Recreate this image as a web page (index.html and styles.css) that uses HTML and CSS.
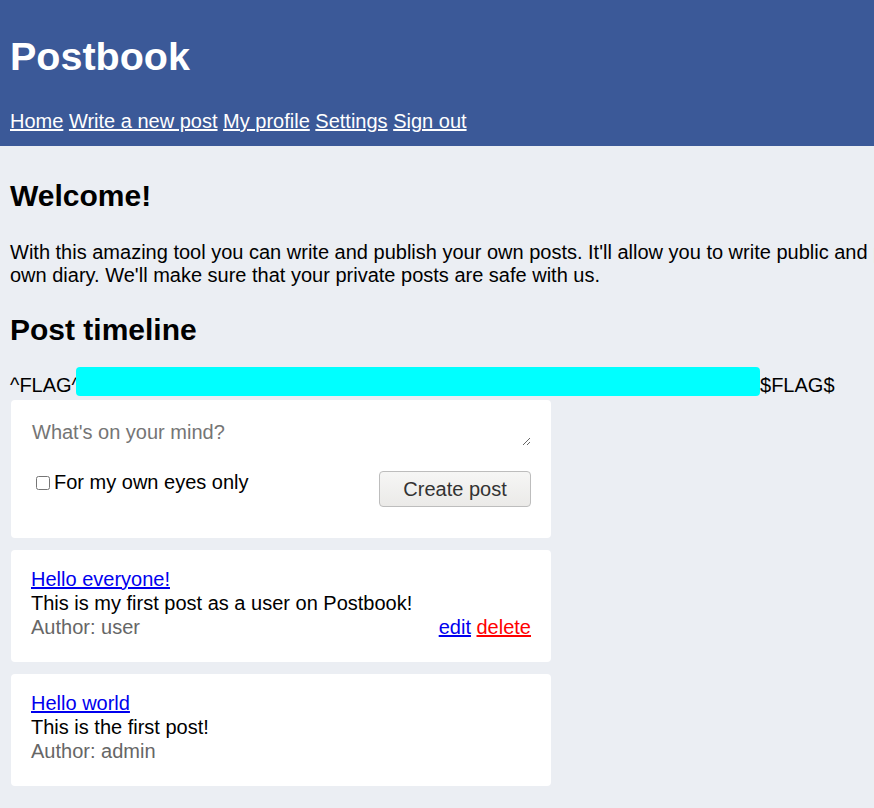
FILE: index.html
```html
<!DOCTYPE html>
<html lang="en">
<head>
<meta charset="utf-8">
<title>Postbook</title>
<link rel="stylesheet" href="styles.css">
</head>
<body>
<header class="site-header">
  <h1 class="brand">Postbook</h1>
  <nav class="nav">
    <a href="#">Home</a>
    <a href="#">Write a new post</a>
    <a href="#">My profile</a>
    <a href="#">Settings</a>
    <a href="#">Sign out</a>
  </nav>
</header>
<main class="content">
  <h2 class="title welcome">Welcome!</h2>
  <p class="intro">With this amazing tool you can write and publish your own posts. It'll allow you to write public and private posts. Public posts can be read by anyone that signs up. Private posts can be used to make your own diary. We'll make sure that your private posts are safe with us.</p>
  <h2 class="title">Post timeline</h2>
  <div class="flag">^FLAG^<span class="redact"></span>$FLAG$</div>
  <form class="card composer">
    <textarea class="composer-input" placeholder="What's on your mind?"></textarea>
    <div class="composer-row">
      <label class="private"><input type="checkbox" class="private-box">For my own eyes only</label>
      <button type="button" class="btn">Create post</button>
    </div>
  </form>
  <article class="card post">
    <a href="#" class="post-title">Hello everyone!</a>
    <div class="post-body">This is my first post as a user on Postbook!</div>
    <div class="post-meta">
      <span class="author">Author: user</span>
      <span class="actions"><a href="#" class="edit">edit</a> <a href="#" class="delete">delete</a></span>
    </div>
  </article>
  <article class="card post">
    <a href="#" class="post-title">Hello world</a>
    <div class="post-body">This is the first post!</div>
    <div class="post-meta">
      <span class="author">Author: admin</span>
    </div>
  </article>
</main>
</body>
</html>
```
FILE: styles.css
```css
html {
  overflow-x: hidden;
}
body {
  margin: 0;
  background: #ebeef3;
  font-family: "Liberation Sans", Arial, sans-serif;
  font-size: 20px;
  color: #000;
}
.site-header {
  background: #3b5998;
  color: #fff;
  padding: 32px 10px 13px;
}
.brand {
  margin: 0;
  font-size: 39.5px;
  line-height: 48px;
  font-weight: bold;
}
.nav {
  margin-top: 30px;
  line-height: 23px;
}
.nav a {
  color: #fff;
  text-decoration: underline;
}
.content {
  padding: 0 10px 20px;
}
.title {
  font-size: 30px;
  font-weight: bold;
  line-height: 35px;
  margin: 0;
}
.welcome {
  margin-top: 32px;
}
.intro {
  width: 1820px;
  margin: 28px 0 25px;
  line-height: 23px;
}
.flag {
  margin: 20px 0 3px;
  line-height: 23px;
}
.redact {
  display: inline-block;
  width: 684px;
  height: 29px;
  margin-left: -5px;
  background: #00ffff;
  border-radius: 4px;
  vertical-align: -4px;
}
.card {
  display: block;
  width: 500px;
  background: #fff;
  border-radius: 4px;
  padding: 20px;
  margin-left: 1px;
  margin-bottom: 12px;
}
.composer-input {
  display: block;
  box-sizing: border-box;
  width: 100%;
  height: 26px;
  border: none;
  padding: 1px 1px;
  margin: 0 0 25px;
  font-family: "Liberation Sans", Arial, sans-serif;
  font-size: 20px;
  line-height: 23px;
  color: #000;
  background: #fff;
  outline: none;
}
.composer-input::placeholder {
  color: #757575;
}
.composer-row {
  display: flex;
  justify-content: space-between;
  align-items: flex-start;
  margin-bottom: 11px;
}
.private {
  display: flex;
  align-items: center;
  line-height: 23px;
}
.private-box {
  width: 14px;
  height: 14px;
  margin: 0 4px 0 5px;
}
.btn {
  box-sizing: border-box;
  height: 36px;
  width: 152px;
  font-family: "Liberation Sans", Arial, sans-serif;
  font-size: 20px;
  color: #333;
  background: linear-gradient(#f6f6f5, #ebeae8);
  border: 1px solid #bdbdbd;
  border-radius: 4px;
  padding: 0;
}
.post {
  line-height: 24px;
  padding: 17px 20px 23px;
}
.post-title {
  color: #0000ee;
}
.post-meta {
  display: flex;
  justify-content: space-between;
}
.author {
  color: #666;
}
.edit {
  color: #0000ee;
}
.delete {
  color: #ff0000;
}
```
